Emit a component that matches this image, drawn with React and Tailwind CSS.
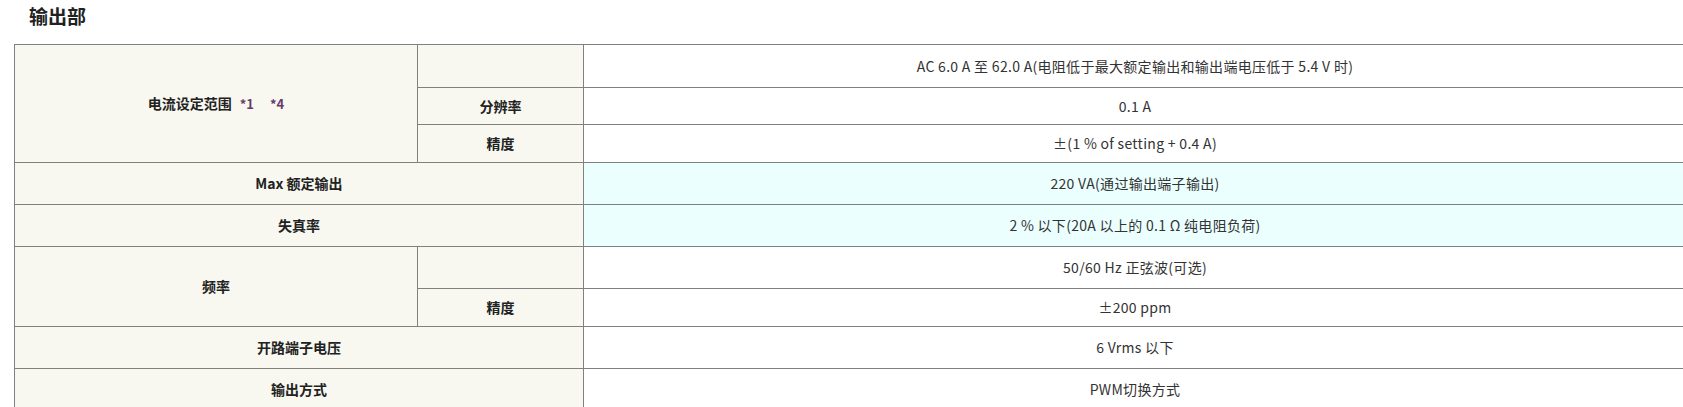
const rows = [
  { label: '电流设定范围', notes: ['*1', '*4'], span: 3, sub: '', value: 'AC 6.0 A 至 62.0 A(电阻低于最大额定输出和输出端电压低于 5.4 V 时)', h: 'h-[43px]' },
  { sub: '分辨率', value: '0.1 A', h: 'h-[37px]' },
  { sub: '精度', value: '±(1 % of setting + 0.4 A)', h: 'h-[38px]' },
  { label: 'Max 额定输出', wide: true, value: '220 VA(通过输出端子输出)', h: 'h-[42px]', hl: true },
  { label: '失真率', wide: true, value: '2 % 以下(20A 以上的 0.1 Ω 纯电阻负荷)', h: 'h-[42px]', hl: true },
  { label: '频率', span: 2, sub: '', value: '50/60 Hz 正弦波(可选)', h: 'h-[42px]' },
  { sub: '精度', value: '±200 ppm', h: 'h-[38px]' },
  { label: '开路端子电压', wide: true, value: '6 Vrms 以下', h: 'h-[42px]' },
  { label: '输出方式', wide: true, value: 'PWM切换方式', h: 'h-[42px]' },
];

const head = 'border border-[#808080] bg-[#f8f8f0] text-center font-bold text-[14px] text-[#222]';
const cell = 'border border-[#808080] text-center text-[14px] tracking-[0.3px] text-[#333]';

export default function App() {
  return (
    <div className="w-[1683px] h-[407px] overflow-hidden bg-white" style={{ fontFamily: '"Noto Sans CJK SC", "Noto Sans", sans-serif' }}>
      <h2 className="h-[44px] pl-[29px] pt-[3px] text-[19px] font-bold leading-[26px] text-[#222]">输出部</h2>
      <table className="ml-[14px] w-[1673px] table-fixed border-collapse">
        <colgroup>
          <col className="w-[403px]" />
          <col className="w-[166px]" />
          <col />
        </colgroup>
        <tbody>
          {rows.map((r, i) => (
            <tr key={i} className={r.h}>
              {r.label && (
                <th colSpan={r.wide ? 2 : 1} rowSpan={r.span || 1} className={`${head} ${r.hl ? 'bg-[#f3f8f0]' : ''}`}>
                  {r.label}
                  {r.notes && (
                    <span className="ml-[8px] text-[#6a3a6a]">
                      {r.notes.map((n, j) => (
                        <span key={n} className={`text-[13px] ${j === 0 ? 'mr-[16px]' : ''}`}>{n}</span>
                      ))}
                    </span>
                  )}
                </th>
              )}
              {r.sub !== undefined && <th className={head}>{r.sub}</th>}
              <td className={`${cell} ${r.hl ? 'bg-[#ebffff]' : 'bg-white'}`}>{r.value}</td>
            </tr>
          ))}
        </tbody>
      </table>
    </div>
  );
}
